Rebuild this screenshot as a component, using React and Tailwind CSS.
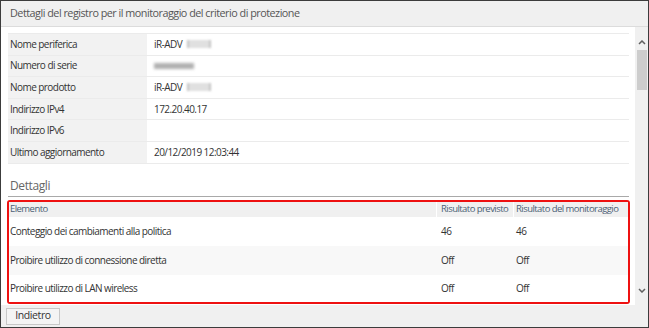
import React from "react";

const infoRows = [
  { label: "Nome periferica", value: "iR-ADV", blur: "model" },
  { label: "Numero di serie", value: "", blur: "serial" },
  { label: "Nome prodotto", value: "iR-ADV", blur: "model" },
  { label: "Indirizzo IPv4", value: "172.20.40.17" },
  { label: "Indirizzo IPv6", value: "" },
  { label: "Ultimo aggiornamento", value: "20/12/2019 12:03:44" },
];

const details = [
  { item: "Conteggio dei cambiamenti alla politica", expected: "46", result: "46" },
  { item: "Proibire utilizzo di connessione diretta", expected: "Off", result: "Off" },
  { item: "Proibire utilizzo di LAN wireless", expected: "Off", result: "Off" },
];

function Blurred({ kind }) {
  if (kind === "serial") {
    return <span className="inline-block w-[40px] h-[6px] bg-[#b0b0b0] blur-[1.5px] align-middle" />;
  }
  return <span className="inline-block ml-[5px] w-[24px] h-[8px] border-x-2 border-[#c4c4c4] bg-[#e0e0e0] blur-[0.8px] align-middle" />;
}

export default function App() {
  return (
    <div
      className="w-[649px] h-[328px] border border-[#3c3c3c] flex flex-col bg-white overflow-hidden"
      style={{ fontFamily: '"Open Sans", "Noto Sans", sans-serif' }}
    >
      {/* Title bar */}
      <div className="h-[26px] shrink-0 bg-[#f0f0f0] border-b border-[#dcdcdc] flex items-center px-[9px] text-[10.8px] text-[#555] tracking-[-0.5px] whitespace-nowrap">
        Dettagli del registro per il monitoraggio del criterio di protezione
      </div>

      <div className="flex-1 flex min-h-0">
        {/* Scrollable content */}
        <div className="flex-1 overflow-hidden pl-[7px] pr-[6px] pt-[6px] text-[10px] text-[#333] tracking-[-0.55px] whitespace-nowrap">
          <div className="border-b border-[#ebebeb]">
            {infoRows.map((r, i) => (
              <div key={i} className="flex h-[21.6px] border-t border-[#ebebeb]">
                <div className="w-[140px] bg-[#f2f2f2] flex items-center px-[2px] border-r border-white">
                  {r.label}
                </div>
                <div className="flex-1 flex items-center px-[6px]">
                  {r.value}
                  {r.blur && <Blurred kind={r.blur} />}
                </div>
              </div>
            ))}
          </div>

          <div className="h-[33px] flex items-end pb-[1px] pl-[2px] border-b border-[#a9a9a9] text-[12px] text-[#666] tracking-[-0.4px]">
            Dettagli
          </div>

          {/* Details table with red highlight */}
          <div className="mt-[3px] -mx-[1px] border-2 border-[#ee1111] rounded-[3px]">
            <div className="flex h-[15px] text-[9.5px] text-[#4b5f75]">
              <div className="flex-1 bg-[#f0f0f0] flex items-center px-[1px] border-r border-white">Elemento</div>
              <div className="w-[77px] bg-[#f0f0f0] flex items-center px-[4px] border-r border-white">Risultato previsto</div>
              <div className="w-[114px] bg-[#f0f0f0] flex items-center px-[2px]">Risultato del monitoraggio</div>
            </div>
            {details.map((d, i) => (
              <div key={i} className={`flex ${i === 2 ? "h-[27px]" : "h-[29px]"} ${i === 1 ? "bg-[#f8f8f8]" : "bg-white"}`}>
                <div className="flex-1 flex items-center px-[1px]">{d.item}</div>
                <div className="w-[77px] flex items-center px-[4px]">{d.expected}</div>
                <div className="w-[114px] flex items-center px-[2px]">{d.result}</div>
              </div>
            ))}
          </div>
        </div>

        {/* Scrollbar */}
        <div className="w-[13px] shrink-0 bg-[#f0f0f0] flex flex-col items-center">
          <div className="h-[23px] flex items-end justify-center pb-[5px]">
            <svg width="8" height="5" viewBox="0 0 8 5">
              <path d="M1 4 L4 1 L7 4" fill="none" stroke="#606060" strokeWidth="1.5" />
            </svg>
          </div>
          <div className="w-[10px] h-[40px] bg-[#cdcdcd]" />
          <div className="flex-1" />
          <div className="h-[20px] flex items-start justify-center pt-[3px]">
            <svg width="8" height="5" viewBox="0 0 8 5">
              <path d="M1 1 L4 4 L7 1" fill="none" stroke="#606060" strokeWidth="1.5" />
            </svg>
          </div>
        </div>
      </div>

      {/* Footer */}
      <div className="h-[22px] shrink-0 bg-[#f0f0f0] flex items-center px-[5px]">
        <button className="w-[54px] h-[17px] border border-[#c8c8c8] bg-[#f4f4f4] text-[10.5px] text-[#333] flex items-center justify-center tracking-[-0.4px]">
          Indietro
        </button>
      </div>
    </div>
  );
}
